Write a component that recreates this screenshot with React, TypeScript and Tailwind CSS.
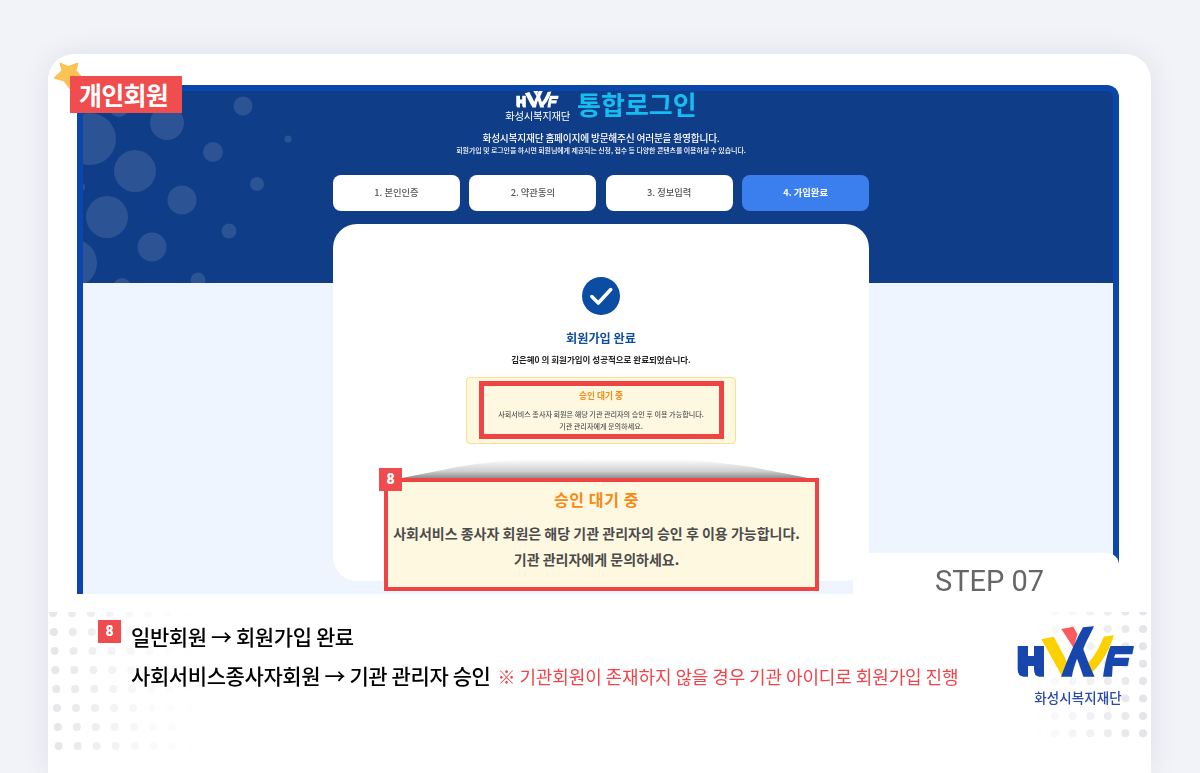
import React from 'react';

const bubbles = [
  [7, 48, 26], [84, 32, 17], [36, 16, 10], [160, 15, 9.5], [205, 48, 3.5], [130, 61, 10], [52, 80, 21],
  [174, 93, 7], [99, 109, 14.5], [24, 126, 21], [146, 140, 7.5], [69, 156, 14.5], [-10, 172, 24],
  [115, 189, 7.5], [39, 196, 9], [-3, 96, 5],
];

const Bubbles = () => (
  <svg className="absolute left-0 top-0" width="300" height="192" viewBox="0 0 300 192">
    {bubbles.map(([cx, cy, r], i) => (
      <circle key={i} cx={cx} cy={cy} r={r} fill="#ffffff" fillOpacity="0.12" />
    ))}
  </svg>
);

const Dots = ({ side }: { side: 'left' | 'right' }) => {
  const circles: React.ReactNode[] = [];
  if (side === 'left') {
    for (let row = 0; row < 8; row++) {
      for (let col = 0; col < 8; col++) {
        const opacity = Math.pow(Math.max(0, 1 - col / 7.5), 1.4);
        circles.push(
          <circle key={`${row}-${col}`} cx={5 + col * 19 + row * 0.8} cy={1 + row * 19} r="4" fill="#e6e7eb" fillOpacity={opacity} />,
        );
      }
    }
    return (
      <svg className="absolute left-0 top-[558px]" width="170" height="145" viewBox="0 0 170 145">
        {circles}
      </svg>
    );
  }
  for (let row = 0; row < 8; row++) {
    for (let col = 0; col < 7; col++) {
      circles.push(
        <circle key={`${row}-${col}`} cx={105 - col * 17.6} cy={row * 17.4 - 0.5} r="4" fill="#e4e5e9" fillOpacity={Math.max(0.08, 1 - col / 6.5)} />,
      );
    }
  }
  return (
    <svg className="absolute left-[990px] top-[558px]" width="112" height="130" viewBox="0 0 112 130">
      {circles}
    </svg>
  );
};

const Star = () => (
  <svg className="absolute left-[5px] top-[6px]" width="32" height="32" viewBox="0 0 32 32">
    <path
      d="M7 3 L15 6.5 L25 3 L23 10.5 L29 17 L21 18 L17 29 L11 21 L1 18 L9 10.5 Z"
      fill="#fbc254"
      stroke="#fbc254"
      strokeWidth="1"
      strokeLinejoin="round"
    />
  </svg>
);

const LogoMark = ({ mono, width, height }: { mono?: boolean; width: number; height: number }) => {
  const blue = mono ? '#ffffff' : '#1747ad';
  const yellow = mono ? '#ffffff' : '#fbd100';
  const red = mono ? '#ffffff' : '#fa5a5c';
  return (
    <svg width={width} height={height} viewBox="25 20 354 171" preserveAspectRatio="none">
      <path d="M158 29 L194 22 L206 45 L195 86 Z" fill={red} />
      <path
        d="M27 80 L58 80 L58 110 L76 110 L76 80 L106 80 L106 172 L92 172 Q76 172 76 150 L76 140 L58 140 L58 172 L45 172 Q27 172 27 150 Z"
        fill={blue}
      />
      <path d="M98 60 L135 52 C150 80 165 105 176 130 L160 170 C140 135 118 95 98 60 Z" fill={yellow} />
      <path d="M285 52 L316 47 C300 95 280 135 238 170 C232 160 228 150 226 142 C250 125 270 90 285 52 Z" fill={yellow} />
      <path
        d="M223 24 L256 21 C240 55 228 75 224 90 C234 118 246 148 258 172 L224 172 C218 155 212 135 205 118 C198 138 192 155 190 172 L157 172 C175 125 195 75 223 24 Z"
        fill={blue}
      />
      <path d="M283 172 C288 140 294 105 306 80 L376 80 L371 105 L320 105 L316 115 L362 115 L357 140 L312 140 L310 172 Z" fill={blue} />
    </svg>
  );
};

const Logo = () => (
  <div className="mt-[6px] flex flex-col items-center">
    <LogoMark width={118} height={57} />
    <span className="mt-[6px] pl-[4px] text-[13.5px] font-medium leading-[16px] tracking-[0.1px] text-[#2a4aa6]">화성시복지재단</span>
  </div>
);

const NumberBadge = () => (
  <div className="flex h-[23px] w-[23px] shrink-0 items-center justify-center bg-[#ef4c4f] font-['Roboto',sans-serif] text-[14px] font-black text-white">
    8
  </div>
);

const steps = ['1. 본인인증', '2. 약관동의', '3. 정보입력', '4. 가입완료'];

export default function App() {
  return (
    <div className="h-[773px] overflow-hidden bg-[#f1f3f8] pl-[48px] pt-[54px] font-['Noto_Sans_CJK_KR',sans-serif]">
      <div className="relative h-[719px] w-[1103px] rounded-t-[26px] bg-white pl-[29px] pr-[32px] pt-[31px] shadow-[0_0_30px_rgba(30,30,70,0.08)]">
        <Dots side="left" />
        <Dots side="right" />
        <Star />
        <div className="absolute left-[22px] top-[22px] z-10 flex h-[37px] w-[112px] items-center justify-center bg-[#f04d4f] pr-[5px] text-[25px] font-bold tracking-[-0.7px] text-white">
          개인회원
        </div>

        {/* Screenshot frame */}
        <div className="relative h-[509px] w-[1042px]">
          <div className="relative h-full overflow-hidden rounded-tr-[12px] border-x-[6px] border-t-[6px] border-[#0a47ad] bg-[linear-gradient(#0f3d87_192px,#eef5fe_192px)] blur-[0.55px]">
            <Bubbles />
            <div className="relative ml-[250px] flex w-[536px] flex-col items-center">
              <div className="flex h-[30px] items-start gap-[7px]">
                <div className="flex flex-col items-center">
                  <div className="-mt-[3px] -mb-[1px]">
                    <LogoMark mono width={43} height={22} />
                  </div>
                  <span className="text-[10.4px] leading-[13px] tracking-[-0.3px] text-white">화성시복지재단</span>
                </div>
                <span className="text-[26px] font-bold leading-[26px] text-[#14bdf2]">통합로그인</span>
              </div>
              <p className="mt-[10px] text-[9.7px] font-medium leading-[14px] tracking-[-0.2px] text-white">
                화성시복지재단 홈페이지에 방문해주신 여러분을 환영합니다.
              </p>
              <p className="mt-[1px] text-[7px] font-medium leading-[8px] tracking-[-0.1px] text-white">
                회원가입 및 로그인을 하시면 회원님에게 제공되는 신청, 접수 등 다양한 콘텐츠를 이용하실 수 있습니다.
              </p>
              <div className="mt-[21px] flex w-full gap-[9.5px]">
                {steps.map((step, i) => (
                  <div
                    key={step}
                    className={
                      i === 3
                        ? 'flex h-[36px] flex-1 items-center justify-center rounded-[8px] bg-[#3b7fee] text-[9.3px] font-bold text-white'
                        : 'flex h-[36px] flex-1 items-center justify-center rounded-[8px] bg-white text-[9.3px] font-medium text-[#555]'
                    }
                  >
                    {step}
                  </div>
                ))}
              </div>
              <div className="mt-[13px] flex h-[357px] w-full flex-col items-center rounded-[24px] bg-white pt-[53px]">
                <div className="flex h-[38px] w-[38px] items-center justify-center rounded-full bg-[#0b4da2]">
                  <svg width="26" height="26" viewBox="0 0 24 24" fill="none" stroke="#ffffff" strokeWidth="3.2" strokeLinecap="round" strokeLinejoin="round">
                    <path d="M3.5 12.5 L9.5 18.5 L21 6" />
                  </svg>
                </div>
                <h2 className="mt-[14px] text-[12.2px] font-bold leading-[18px] text-[#0f4c9c]">회원가입 완료</h2>
                <p className="mt-[6px] text-[8.5px] font-bold leading-[12px] text-[#222]">김은혜0 의 회원가입이 성공적으로 완료되었습니다.</p>
                <div className="mt-[12px] flex h-[67px] w-[270px] justify-center rounded-[4px] border border-[#fde08a] bg-[#fff8e1] pt-[3px]">
                  <div className="flex h-[58px] w-[245px] flex-col items-center border-[5px] border-[#ef4444] pt-[4px] text-center">
                    <span className="text-[8.7px] font-bold leading-[11px] text-[#f58a14]">승인 대기 중</span>
                    <span className="mt-[7px] text-[7.1px] font-medium leading-[12px] text-[#555]">
                      사회서비스 종사자 회원은 해당 기관 관리자의 승인 후 이용 가능합니다.
                      <br />
                      기관 관리자에게 문의하세요.
                    </span>
                  </div>
                </div>
              </div>
            </div>

            {/* Zoomed notice */}
            <svg className="absolute left-[319px] top-[368px]" width="406" height="19" viewBox="0 0 406 19">
              <defs>
                <linearGradient id="fade" x1="0" y1="1" x2="0" y2="0">
                  <stop offset="0" stopColor="#8f8f8f" />
                  <stop offset="0.35" stopColor="#cfcfcf" />
                  <stop offset="1" stopColor="#ffffff" />
                </linearGradient>
              </defs>
              <path d="M0 19 L55 8 Q95 1 135 0 L270 0 Q310 2 350 8 L406 19 Z" fill="url(#fade)" />
            </svg>
            <div className="absolute left-[301px] top-[387px] flex h-[113px] w-[435px] flex-col items-center border-[4px] border-[#ef4444] bg-[#fff8e1] pr-[10px] pt-[6px]">
              <span className="text-[16px] font-bold leading-[22px] tracking-[0.6px] text-[#f58a14]">승인 대기 중</span>
              <span className="mt-[10px] text-center text-[14px] font-bold leading-[26px] text-[#4b4b4b]">
                사회서비스 종사자 회원은 해당 기관 관리자의 승인 후 이용 가능합니다.
                <br />
                기관 관리자에게 문의하세요.
              </span>
            </div>
            <div className="absolute left-[296px] top-[377px]">
              <NumberBadge />
            </div>
          </div>
          <div className="absolute bottom-0 right-0 flex h-[41px] w-[266px] items-center justify-center rounded-tr-[12px] bg-white pl-[7px] pt-[16px] font-['Roboto',sans-serif] text-[29px] text-[#666]">
            STEP 07
          </div>
        </div>

        {/* Description */}
        <div className="relative -mr-[16px] flex justify-between pl-[21px] pt-[26px]">
          <div className="flex gap-[10px]">
            <NumberBadge />
            <div className="-mt-[3px] text-[21px] font-medium leading-[39px] tracking-[-0.4px] text-[#000]">
              <p>일반회원 → 회원가입 완료</p>
              <p className="flex items-baseline gap-[7px]">
                사회서비스종사자회원 → 기관 관리자 승인
                <span className="text-[18px] font-normal tracking-[-0.1px] text-[#f0444a]">※ 기관회원이 존재하지 않을 경우 기관 아이디로 회원가입 진행</span>
              </p>
            </div>
          </div>
          <Logo />
        </div>
      </div>
    </div>
  );
}
